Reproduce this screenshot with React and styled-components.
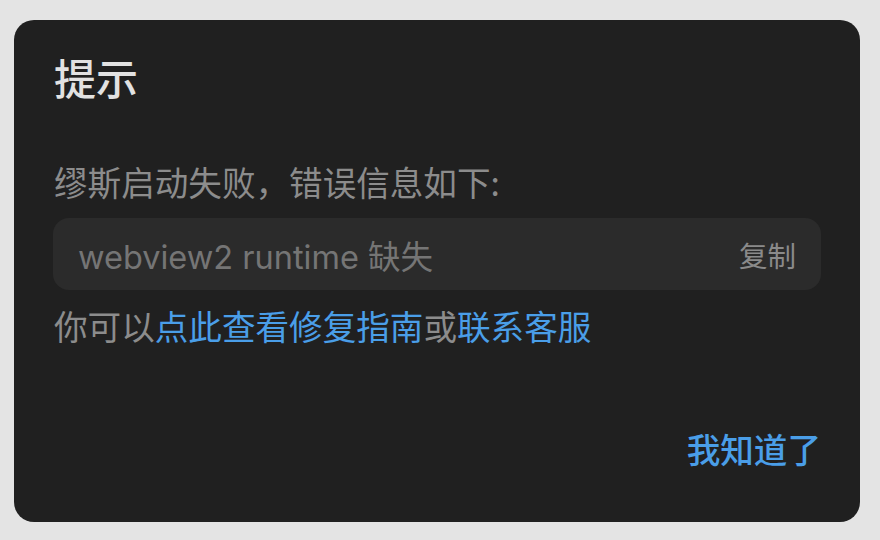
import React from "react";
import styled, { createGlobalStyle } from "styled-components";

const Global = createGlobalStyle`
  html, body { margin: 0; padding: 0; background: #e4e4e4; }
  body { font-family: "Noto Sans CJK SC", "Noto Sans", sans-serif; }
`;

const Page = styled.div`
  width: 880px;
  height: 540px;
  padding: 20px 20px 18px 14px;
  box-sizing: border-box;
`;

const Card = styled.div`
  width: 846px;
  height: 502px;
  box-sizing: border-box;
  background: #202020;
  border-radius: 20px;
  padding: 36px 39px 53px 39px;
  display: flex;
  flex-direction: column;
`;

const Title = styled.div`
  font-size: 42px;
  line-height: 42px;
  font-weight: 500;
  color: #e2e2e2;
  padding-left: 1px;
`;

const Text = styled.div`
  font-size: 33.6px;
  line-height: 40px;
  color: #8c8c8c;
  padding-left: 1px;
  margin-top: ${(p) => p.$mt}px;
  white-space: nowrap;
`;

const Link = styled.span`
  color: #4a9ee8;
  cursor: pointer;
`;

const ErrorBox = styled.div`
  margin-top: 16px;
  height: 72px;
  border-radius: 16px;
  background: #2b2b2b;
  display: flex;
  align-items: center;
  justify-content: space-between;
  padding: 0 25px 0 25px;
`;

const ErrorText = styled.span`
  font-family: "Inter", "Noto Sans CJK SC", sans-serif;
  font-size: 32.5px;
  color: #757575;
`;

const CopyButton = styled.span`
  font-size: 28.5px;
  color: #8a8a8a;
  cursor: pointer;
`;

const Footer = styled.div`
  margin-top: auto;
  display: flex;
  justify-content: flex-end;
`;

const OkButton = styled.span`
  font-size: 33.6px;
  line-height: 40px;
  font-weight: 500;
  color: #4a9ee8;
  cursor: pointer;
`;

export default function App() {
  return (
    <>
      <Global />
      <Page>
        <Card>
          <Title>提示</Title>
          <Text $mt={64}>缪斯启动失败，错误信息如下:</Text>
          <ErrorBox>
            <ErrorText>webview2 runtime 缺失</ErrorText>
            <CopyButton>复制</CopyButton>
          </ErrorBox>
          <Text $mt={16}>
            你可以<Link>点此查看修复指南</Link>或<Link>联系客服</Link>
          </Text>
          <Footer>
            <OkButton>我知道了</OkButton>
          </Footer>
        </Card>
      </Page>
    </>
  );
}
